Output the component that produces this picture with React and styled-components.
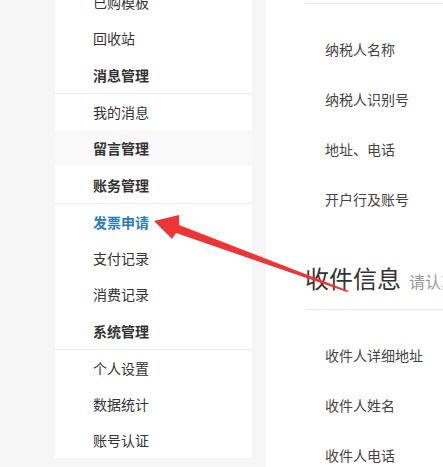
import React from "react";
import styled, { createGlobalStyle } from "styled-components";

const GlobalStyle = createGlobalStyle`
  html, body {
    margin: 0;
    padding: 0;
    background: #f6f6f6;
    font-family: "Noto Sans CJK SC", "Noto Sans", sans-serif;
  }
`;

const Page = styled.div`
  position: relative;
  width: 443px;
  height: 467px;
  overflow: hidden;
`;

const Layout = styled.div`
  display: flex;
  align-items: flex-start;
  gap: 14px;
  margin-top: -16px;
  padding-left: 55px;
`;

const Sidebar = styled.nav`
  width: 197px;
  flex: none;
  background: #fff;
  display: flex;
  flex-direction: column;
`;

const Item = styled.div`
  height: 36px;
  display: flex;
  align-items: center;
  padding-left: 38px;
  font-size: 14px;
  color: ${(p) => (p.$active ? "#2a7bc0" : "#333")};
  font-weight: ${(p) => (p.$active ? 700 : 400)};
  white-space: nowrap;
`;

const Heading = styled.div`
  height: ${(p) => (p.$divider ? "37px" : "36px")};
  display: flex;
  align-items: center;
  padding-left: 38px;
  font-size: 14px;
  font-weight: 700;
  color: #333;
  background: ${(p) => (p.$shaded ? "#f9f9f9" : "#fff")};
  border-bottom: ${(p) => (p.$divider ? "1px solid #ececec" : "none")};
  white-space: nowrap;
`;

const Main = styled.main`
  flex: 1;
  min-width: 0;
  margin-top: -66px;
  background: #fff;
  min-height: 600px;
  padding-left: 39px;
  overflow: hidden;
`;

const SectionTitle = styled.div`
  display: flex;
  align-items: baseline;
  padding: 36px 0 13px;
  border-bottom: 1px solid #e8e8e8;
  white-space: nowrap;
`;

const TitleText = styled.span`
  font-size: 24px;
  line-height: 36px;
  color: #333;
`;

const TitleHint = styled.span`
  margin-left: 8px;
  font-size: 16px;
  color: #999;
`;

const FieldList = styled.div`
  display: flex;
  flex-direction: column;
  padding-top: 20px;
`;

const FieldRow = styled.div`
  height: 50px;
  display: flex;
  align-items: center;
  padding-left: 20px;
  font-size: 14px;
  color: #444;
  white-space: nowrap;
`;

const Annotation = styled.svg`
  position: absolute;
  left: 0;
  top: 0;
  pointer-events: none;
`;

const menu = [
  { type: "item", label: "已购模板" },
  { type: "item", label: "回收站" },
  { type: "heading", label: "消息管理", divider: true },
  { type: "item", label: "我的消息" },
  { type: "heading", label: "留言管理", shaded: true },
  { type: "heading", label: "账务管理", divider: true },
  { type: "item", label: "发票申请", active: true },
  { type: "item", label: "支付记录" },
  { type: "item", label: "消费记录" },
  { type: "heading", label: "系统管理", divider: true },
  { type: "item", label: "个人设置" },
  { type: "item", label: "数据统计" },
  { type: "item", label: "账号认证" },
];

const invoiceFields = ["纳税人名称", "纳税人识别号", "地址、电话", "开户行及账号"];
const receiverFields = ["收件人详细地址", "收件人姓名", "收件人电话"];

export default function App() {
  return (
    <Page>
      <GlobalStyle />
      <Layout>
        <Sidebar>
          {menu.map((m) =>
            m.type === "heading" ? (
              <Heading key={m.label} $divider={m.divider} $shaded={m.shaded}>
                {m.label}
              </Heading>
            ) : (
              <Item key={m.label} $active={m.active}>
                {m.label}
              </Item>
            )
          )}
        </Sidebar>
        <Main>
          <SectionTitle>
            <TitleText>发票信息</TitleText>
            <TitleHint>请认真填写发票信息</TitleHint>
          </SectionTitle>
          <FieldList>
            {invoiceFields.map((f) => (
              <FieldRow key={f}>{f}</FieldRow>
            ))}
          </FieldList>
          <SectionTitle>
            <TitleText>收件信息</TitleText>
            <TitleHint>请认真填写收件信息</TitleHint>
          </SectionTitle>
          <FieldList>
            {receiverFields.map((f) => (
              <FieldRow key={f}>{f}</FieldRow>
            ))}
          </FieldList>
        </Main>
      </Layout>
      <Annotation width="443" height="467" viewBox="0 0 443 467">
        <polygon
          points="154,221 179,215 179,225 349,291 347,292 176,233 172,239"
          fill="#ee3535"
        />
      </Annotation>
    </Page>
  );
}
